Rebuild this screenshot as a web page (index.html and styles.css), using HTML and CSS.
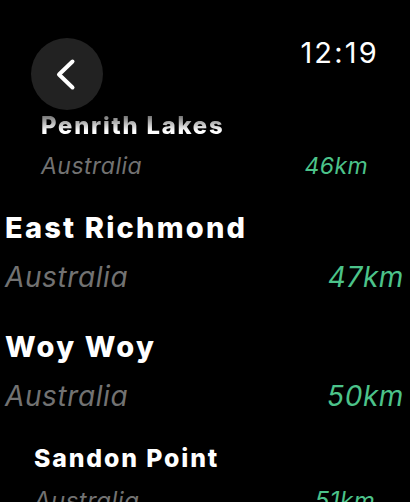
FILE: index.html
```html
<!DOCTYPE html>
<html lang="en">
<head>
  <meta charset="UTF-8">
  <meta name="viewport" content="width=device-width, initial-scale=1.0">
  <title>Nearby Spots</title>
  <link rel="stylesheet" href="styles.css">
</head>
<body>
  <div class="watch">
    <ul class="places">
      <li class="place place-top">
        <div class="place-name">Penrith Lakes</div>
        <div class="place-meta">
          <span class="country">Australia</span>
          <span class="distance">46km</span>
        </div>
      </li>
      <li class="place">
        <div class="place-name">East Richmond</div>
        <div class="place-meta">
          <span class="country">Australia</span>
          <span class="distance">47km</span>
        </div>
      </li>
      <li class="place">
        <div class="place-name">Woy Woy</div>
        <div class="place-meta">
          <span class="country">Australia</span>
          <span class="distance">50km</span>
        </div>
      </li>
      <li class="place place-bottom">
        <div class="place-name">Sandon Point</div>
        <div class="place-meta">
          <span class="country">Australia</span>
          <span class="distance">51km</span>
        </div>
      </li>
    </ul>

    <!-- Top bar floats over the list -->
    <div class="top-bar">
      <button class="back-btn" aria-label="Back">
        <svg width="72" height="72" viewBox="0 0 72 72">
          <path d="M41.5 23.5 L28 36.5 L41.5 49.5" fill="none" stroke="#fff" stroke-width="4" stroke-linecap="round" stroke-linejoin="round"/>
        </svg>
      </button>
      <span class="time">12:19</span>
    </div>
  </div>
</body>
</html>
```

FILE: styles.css
```css
body {
  margin: 0;
  background-color: #000;
  color: #fff;
  font-family: 'Inter', 'Liberation Sans', sans-serif;
}

.watch {
  position: relative;
  width: 410px;
  height: 502px;
  overflow: hidden;
}

.top-bar {
  position: absolute;
  top: 0;
  left: 0;
  right: 0;
  display: flex;
  justify-content: space-between;
  align-items: flex-start;
  padding: 38px 31px 0 31px;
}

.back-btn {
  width: 72px;
  height: 72px;
  padding: 0;
  border: none;
  border-radius: 50%;
  background-color: #222;
  display: flex;
}

.time {
  margin-top: -3px;
  font-size: 29px;
  line-height: 36px;
  font-weight: 400;
  letter-spacing: 2.2px;
}

.places {
  list-style: none;
  margin: 74px 0 0;
  padding: 0;
}

.place {
  padding: 18px 6px 18px 5px;
}

.place-name {
  font-size: 29px;
  line-height: 34px;
  font-weight: 800;
  letter-spacing: 2.2px;
  margin-bottom: 15px;
}

.place-meta {
  display: flex;
  justify-content: space-between;
  font-size: 28px;
  line-height: 34px;
  font-style: italic;
  letter-spacing: 0.6px;
}

.country {
  color: #727272;
}

.distance {
  color: #4cc38a;
}

/* rows shrinking at the edges of the screen */
.place-top {
  transform: translateY(12px) scale(0.82);
}

.place-top .place-name {
  filter: blur(0.7px);
  -webkit-mask-image: linear-gradient(to bottom, rgba(0, 0, 0, 0.3), #000 70%);
  mask-image: linear-gradient(to bottom, rgba(0, 0, 0, 0.3), #000 70%);
}

.place-bottom {
  transform: translateY(-11px) scale(0.855);
}
```
